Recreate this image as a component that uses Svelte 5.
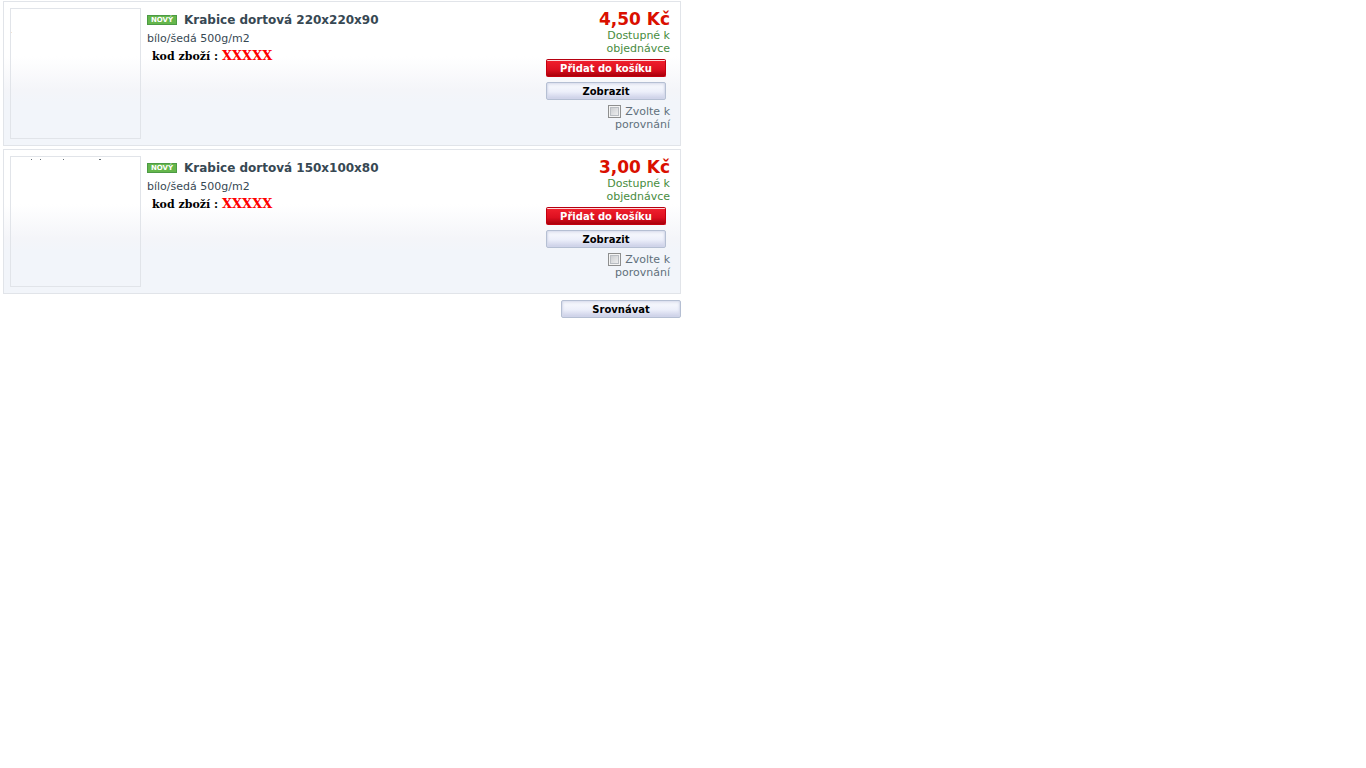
<script>
  // Products shown in the list
  let products = [
    { id: 1, name: 'Krabice dortová 220x220x90', price: '4,50 Kč', description: 'bílo/šedá 500g/m2', code: 'XXXXX', sketch: false },
    { id: 2, name: 'Krabice dortová 150x100x80', price: '3,00 Kč', description: 'bílo/šedá 500g/m2', code: 'XXXXX', sketch: true }
  ];

  let compared = []; // Ids picked for comparison
</script>

<form class="listing" on:submit|preventDefault>
  <ul>
    {#each products as product (product.id)}
      <li>
        <a href="#product-{product.id}" class="thumb" aria-label={product.name}>
          {#if product.sketch}
            <svg width="129" height="129" viewBox="0 0 129 129">
              <path d="M20 2.5h1M29 2.5h1M52 2.5h1M88 2.5h2" stroke="#667078" />
            </svg>
          {:else}
            <svg width="129" height="129" viewBox="0 0 129 129">
              <path d="M0 23.5h1" stroke="#f3e4d4" />
            </svg>
          {/if}
        </a>
        <div class="info">
          <h3>
            <span class="new">NOVÝ</span>
            <a href="#product-{product.id}">{product.name}</a>
          </h3>
          <p class="desc">{product.description}</p>
          <p class="code">kod zboží : <span>{product.code}</span></p>
        </div>
        <div class="buy">
          <span class="price">{product.price}</span>
          <span class="availability">Dostupné k objednávce</span>
          <button type="button" class="button cart">Přidat do košíku</button>
          <button type="button" class="button">Zobrazit</button>
          <div class="compare">
            <input type="checkbox" id="compare-{product.id}" value={product.id} bind:group={compared} />
            <label for="compare-{product.id}">Zvolte k porovnání</label>
          </div>
        </div>
      </li>
    {/each}
  </ul>
  <button type="submit" class="button">Srovnávat</button>
</form>

<style>
  :global(body) {
    background: #fff;
    font-family: Verdana, "DejaVu Sans", sans-serif;
    font-size: 11px;
    line-height: 13px;
    color: #374853;
  }

  .listing {
    display: flex;
    flex-direction: column;
    align-items: flex-end;
    gap: 6px;
    max-width: 678px;
    margin: 1px 3px;
  }

  ul {
    display: flex;
    flex-direction: column;
    gap: 3px;
    width: 100%;
    margin: 0;
    padding: 0;
    list-style: none;
  }

  li {
    display: flex;
    gap: 6px;
    padding: 6px;
    border: 1px solid #e1e4e9;
    background: linear-gradient(#fff 38%, #f4f5f9 62%, #f2f5fa 70%, #f2f5fa);
  }

  a {
    color: inherit;
    text-decoration: none;
  }

  .thumb {
    width: 129px;
    height: 129px;
    border: 1px solid #e1e4e9;
  }

  .thumb svg {
    display: block;
  }

  .info {
    flex: 1;
  }

  h3 {
    display: flex;
    align-items: center;
    gap: 7px;
    height: 16px;
    margin: 4px 0;
    font-size: 12px;
  }

  .new {
    box-sizing: border-box;
    width: 30px;
    height: 10px;
    border: 1px solid #4c9a45;
    background: #65b64b;
    color: #fff;
    font-size: 7px;
    line-height: 8px;
    text-align: center;
  }

  p {
    margin: 0;
  }

  .code {
    margin: 4px 5px;
    color: #000;
    font-family: "Bernard MT Condensed", "DejaVu Serif", serif;
    font-size: 11px;
    font-weight: bold;
  }

  .code span {
    color: #f00;
    font-size: 13px;
  }

  .buy {
    display: flex;
    flex-direction: column;
    align-items: flex-end;
    width: 124px;
    padding-right: 4px;
    text-align: right;
  }

  .price {
    margin-top: 1px;
    color: #da0f00;
    font-size: 17px;
    font-weight: bold;
    line-height: 20px;
  }

  .availability {
    margin-bottom: 4px;
    color: #488c40;
  }

  .button {
    width: 120px;
    height: 18px;
    padding: 1px 0 0;
    border: 1px solid #b5bfd3;
    border-radius: 2px;
    background: linear-gradient(#e6eaf4, #f4f6fc 25%, #eceffa 55%, #cacee6);
    box-shadow: inset 1px 0 2px #d4d9ea, inset -1px 0 2px #d4d9ea;
    color: #000;
    font-family: inherit;
    font-size: 10px;
    font-weight: bold;
    line-height: 15px;
  }

  .buy .button {
    margin: 0 4px 5px 0;
  }

  .buy .cart {
    border-color: #c4000f;
    border-top-color: #b50010;
    background: linear-gradient(#ffd8da 1px, #ef1f2c 1px, #dd1020 60%, #a9000b);
    box-shadow: none;
    color: #fff;
  }

  .compare {
    width: 100px;
    color: #61707c;
  }

  input {
    appearance: none;
    width: 13px;
    height: 13px;
    margin: 0 1px 0 0;
    border: 1px solid #8e8f8f;
    background: linear-gradient(135deg, #c3c6ca, #f6f6f6);
    box-shadow: inset 0 0 0 1px #f4f4f4, inset 0 0 0 2px #b9bdc2;
    vertical-align: bottom;
  }

  input:checked {
    background: #4b6097;
  }
</style>
